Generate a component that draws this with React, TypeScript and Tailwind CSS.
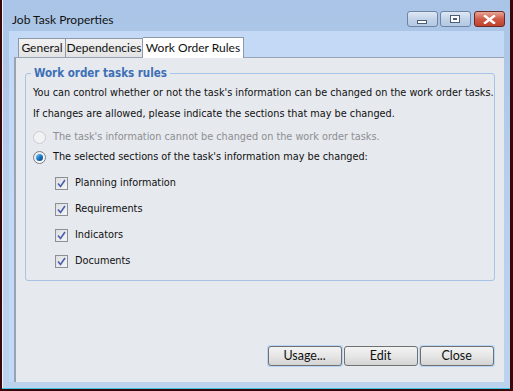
import React from 'react';

const uiFont = { fontFamily: 'Lato, "Open Sans", "Noto Sans", sans-serif' };
const bodyFont = { fontFamily: '"DejaVu Sans Condensed", "DejaVu Sans", sans-serif' };

function CaptionButton({ kind }: { kind: 'min' | 'max' | 'close' }) {
  if (kind === 'close') {
    return (
      <div className="w-[31px] h-[16px] rounded-[3px] border border-[#6b2a24] bg-gradient-to-b from-[#e8a597] via-[#cf5b48] to-[#c0412e] flex items-center justify-center">
        <svg width="13" height="9" viewBox="0 0 13 9">
          <path d="M2 1 L11 8 M11 1 L2 8" stroke="#ffffff" strokeWidth="2.4" strokeLinecap="square" />
        </svg>
      </div>
    );
  }
  return (
    <div className="w-[31px] h-[16px] rounded-[3px] border border-[#6f84a3] bg-gradient-to-b from-[#dfe9f6] via-[#c3d3e8] to-[#b3c8e3] flex items-center justify-center">
      {kind === 'min' ? (
        <div className="w-[10px] h-[4px] mt-[5px] bg-white border border-[#4b5d78]" />
      ) : (
        <div className="w-[10px] h-[8px] border border-[#4b5d78] bg-white flex items-center justify-center">
          <div className="w-[4px] h-[2px] bg-[#4b5d78]" />
        </div>
      )}
    </div>
  );
}

function Radio({ checked, disabled }: { checked?: boolean; disabled?: boolean }) {
  return (
    <div
      className={`w-[13px] h-[13px] rounded-full border flex items-center justify-center ${
        disabled ? 'border-[#c9cdd3] bg-[#f1f2f4]' : 'border-[#7a7f87] bg-gradient-to-br from-[#e4e6ea] to-[#ffffff]'
      }`}
    >
      {checked && <div className="w-[7px] h-[7px] rounded-full bg-gradient-to-br from-[#7fd0f6] via-[#1a79c8] to-[#0c3f7a]" />}
    </div>
  );
}

function Check({ label }: { label: string }) {
  return (
    <div className="flex items-center h-[26px]">
      <div className="w-[13px] h-[13px] border border-[#8c8f94] bg-gradient-to-br from-[#dcdee2] to-[#f4f5f6] flex items-center justify-center">
        <svg width="9" height="9" viewBox="0 0 9 9">
          <path d="M1 4.5 L3.5 7.5 L8 1" stroke="#4a5fa8" strokeWidth="1.6" fill="none" />
        </svg>
      </div>
      <span className="ml-[7px] text-[10.8px] text-[#111]">{label}</span>
    </div>
  );
}

function DlgButton({ label, focus }: { label: string; focus?: boolean }) {
  return (
    <div className={`p-px rounded-[3px] ${focus ? 'bg-[#b7d6f6]' : ''}`}>
      <div className="w-[74px] h-[20px] rounded-[3px] border border-[#707070] bg-gradient-to-b from-[#f3f3f3] via-[#e6e6e6] to-[#d4d4d4] flex items-center justify-center text-[12.5px] text-[#111]" style={uiFont}>
        {label}
      </div>
    </div>
  );
}

export default function App() {
  return (
    <div className="w-[513px] h-[391px] bg-[#3a0808] overflow-hidden">
      <div className="ml-[2px] w-[508px] h-[389px] border-r border-b border-[#3fc6e6] flex">
        <div className="flex-1 flex flex-col border-l border-[#eef3fa] bg-gradient-to-b from-[#a9c4e6] via-[#b8cfec] to-[#bcd3ee]">
          {/* Title bar */}
          <div className="h-[31px] flex items-start pl-[9px] pr-[5px]">
            <span className="mt-[11px] text-[12px] text-[#111] whitespace-nowrap" style={uiFont}>Job Task Properties</span>
            <div className="ml-auto mt-[11px] flex gap-[1px]">
              <CaptionButton kind="min" />
              <div className="ml-[1px]"><CaptionButton kind="max" /></div>
              <div className="ml-[2px]"><CaptionButton kind="close" /></div>
            </div>
          </div>

          {/* Client area */}
          <div className="ml-[6px] mr-[6px] h-[351px] bg-[#c4d9f6] flex flex-col">
            {/* Tabs */}
            <div className="h-[26px] flex items-end pl-[9px] text-[12px] text-[#111]" style={uiFont}>
              <div className="w-[48px] h-[19px] border border-b-0 border-[#8d99ab] bg-gradient-to-b from-[#f2f2f2] to-[#e3e3e3] flex items-center justify-center">General</div>
              <div className="w-[77px] h-[19px] border border-b-0 border-l-0 border-[#8d99ab] bg-gradient-to-b from-[#f2f2f2] to-[#e3e3e3] flex items-center justify-center">Dependencies</div>
              <div className="w-[101px] h-[21px] mb-[-1px] border border-b-0 border-l-0 border-[#8d99ab] bg-white flex items-start justify-center pt-[1px] relative z-10">Work Order Rules</div>
            </div>

            {/* Tab panel */}
            <div className="flex-1 ml-[5px] border-t border-l-2 border-[#98a3b4] bg-[#e6e9ee] flex flex-col pl-[9px] pr-[9px] pt-[15px] pb-[15px]" style={bodyFont}>
              <div className="relative border border-[#a8c3e6] rounded-[3px] h-[208px] pt-[8px] pl-[7px]">
                <div className="absolute left-[5px] -top-[9px] px-[3px] bg-[#e6e9ee] text-[11.5px] font-bold text-[#3d6fb6] whitespace-nowrap">Work order tasks rules</div>
                <div className="text-[10.8px] text-[#111] leading-[21px] whitespace-nowrap">
                  <div>You can control whether or not the task's information can be changed on the work order tasks.</div>
                  <div>If changes are allowed, please indicate the sections that may be changed.</div>
                </div>
                <div className="mt-[3px] flex items-center h-[20px] whitespace-nowrap">
                  <Radio disabled />
                  <span className="ml-[7px] text-[10.8px] text-[#8d8f93]">The task's information cannot be changed on the work order tasks.</span>
                </div>
                <div className="flex items-center h-[20px] whitespace-nowrap">
                  <Radio checked />
                  <span className="ml-[7px] text-[10.8px] text-[#111]">The selected sections of the task's information may be changed:</span>
                </div>
                <div className="pl-[22px] mt-[3px]">
                  <Check label="Planning information" />
                  <Check label="Requirements" />
                  <Check label="Indicators" />
                  <Check label="Documents" />
                </div>
              </div>
              <div className="mt-auto flex justify-end">
                <DlgButton label="Usage..." focus />
                <DlgButton label="Edit" />
                <DlgButton label="Close" focus />
              </div>
            </div>
          </div>
        </div>
      </div>
    </div>
  );
}
